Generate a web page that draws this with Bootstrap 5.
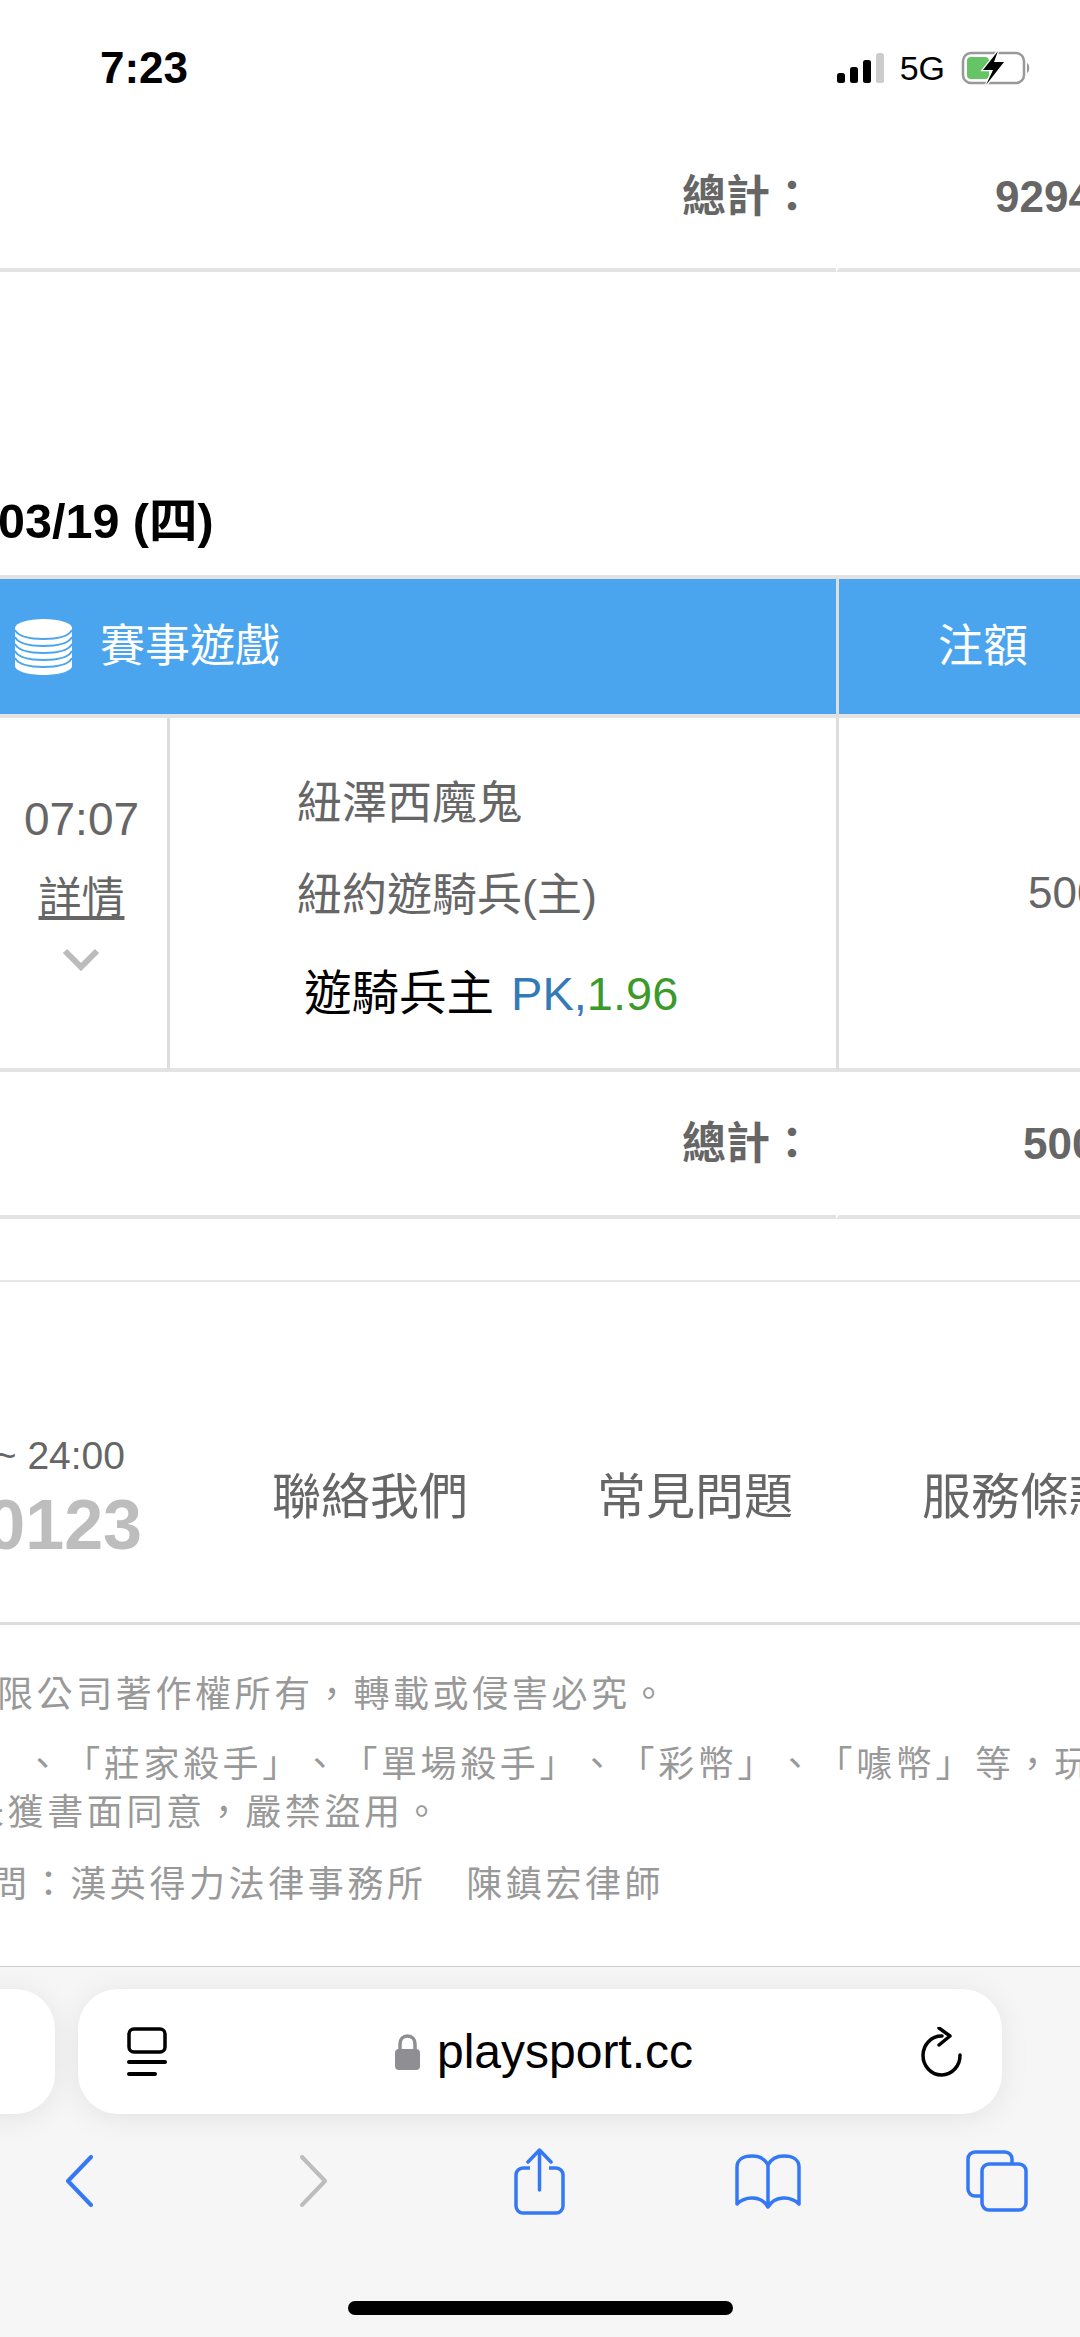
<!DOCTYPE html>
<html lang="zh-Hant">
<head>
<meta charset="utf-8">
<title>playsport.cc</title>
<link href="https://cdn.jsdelivr.net/npm/bootstrap@5.3.0/dist/css/bootstrap.min.css" rel="stylesheet">
<style>
html,body{width:1080px;height:2337px;overflow:hidden;margin:0;background:#fff;font-family:"Liberation Sans","Noto Sans CJK TC",sans-serif;color:#666}
.stat-strip{height:125px;padding:42px 49px 0 100px}
.stat-time{font-size:44px;line-height:52px;font-weight:700;color:#000}
.stat-icons{height:52px;gap:16px}
.stat-net{font-size:34px;line-height:36px;color:#000}
.sheet-wrap{width:1142px;margin-left:-6px}
.table.sheet{table-layout:fixed;width:1142px;margin:0;border-collapse:separate;border-spacing:0;--bs-table-bg:transparent;color:#666}
.c-a{width:173px}.c-b{width:669px}.c-c{width:300px}
.table.sheet>*>tr>*{padding:0;vertical-align:middle;border-bottom:4px solid #e3e3e3;font-size:44px;color:#666;font-weight:400}
.table.sheet>*>tr>.sum-label{height:147px;text-align:right;padding-right:22px;font-weight:700}
.table.sheet>*>tr>.sum-val{font-weight:700;border-left:3px solid #fff;white-space:nowrap}
.pad-a{padding-left:156px!important}
.pad-b{padding-left:184px!important}
.pad-c{padding-left:189px!important}
.day-title{font-size:48.500px;line-height:60px;font-weight:700;color:#000;margin:219px 0 24px -2px}
.table.sheet>thead>tr>th{height:143px;background:#4ba5ee;color:#fff;font-size:45px;border-top:4px solid #e3e3e3;border-bottom:4px solid #e3e3e3}
.table.sheet>thead>tr>.h-b{border-left:3px solid #ddd;padding-left:99px}
.h-a-in{padding-left:21px;gap:28px}
.table.sheet>tbody>tr>.t-cell{height:354px;text-align:center;padding-bottom:5px}
.table.sheet>tbody>tr>.m-cell{border-left:3px solid #ddd;padding:12px 0 0 127px}
.table.sheet>tbody>tr>.a-cell{border-left:3px solid #ddd}
.t-clock{font-size:46px;line-height:54px;margin-bottom:26px;padding-left:2px}
.t-more{font-size:43px;line-height:52px;color:#666;text-decoration:underline;display:block;margin-bottom:-1px;padding-left:2px}
.team{font-size:45px;line-height:54px;margin-bottom:38px}
.pick{font-size:47px;line-height:56px;color:#000;padding-left:7px;margin-top:43px;white-space:nowrap}
.pick-cjk{font-size:47.500px;margin-right:4px}
.pk{color:#337ab7}.odd{color:#3c9a2b}
.thin-rule{height:2px;background:#e8e8e8;margin-top:61px}
.foot-main{padding-top:150px;height:340px}
.foot-left{width:142px;flex:none}
.foot-hours{font-size:39px;line-height:48px;margin:0 17px 5px 0;white-space:nowrap}
.foot-phone{font-size:70px;line-height:80px;font-weight:700;color:#bdbdbd}
.foot-nav{margin:35px 0 0 130px;gap:129px;font-size:49px;line-height:60px;white-space:nowrap}
.foot-nav a{color:#666;text-decoration:none}
.notes{border-top:3px solid #ddd;padding:46px 0 57px;font-size:36px;line-height:48px;letter-spacing:3.600px;color:#999;white-space:nowrap;text-spacing-trim:space-all;font-kerning:none}
.n1{margin-left:-3px;margin-bottom:22px}
.n2{margin-left:-15px}
.n3{margin-left:-32px;margin-bottom:24px}
.n4{margin-left:-9px}
.safari{height:371px;background:#f6f6f6;border-top:1px solid #ccc;padding-top:22px}
.pill-row{gap:23px;margin-left:-25px}
.pill-side{width:80px;height:125px;background:#fff;border-radius:0 40px 40px 0;flex:none;box-shadow:0 4px 30px rgba(0,0,0,.08)}
.pill-main{width:924px;height:125px;background:#fff;border-radius:40px;flex:none;padding:0 40px 0 49px;box-shadow:0 4px 30px rgba(0,0,0,.08)}
.site{font-size:48px;line-height:56px;color:#000;gap:17px}
.tool-row{display:grid;grid-template-columns:230px 240px 210px 248px 210px;margin:32px 0 0 -36px;height:70px}
.home-bar{width:385px;height:14px;border-radius:7px;background:#000;margin:85px 0 0 348px}
</style>
</head>
<body>
<div class="stat-strip d-flex justify-content-between">
  <div class="stat-time">7:23</div>
  <div class="stat-icons d-flex align-items-center">
    <svg width="47" height="30" viewBox="0 0 47 30"><rect x="0" y="20" width="8" height="10" rx="2.5" fill="#000"/><rect x="13" y="14" width="8" height="16" rx="2.5" fill="#000"/><rect x="26" y="7" width="8" height="23" rx="2.5" fill="#000"/><rect x="39" y="0" width="8" height="30" rx="2.5" fill="#ccc"/></svg>
    <div class="stat-net">5G</div>
    <svg width="70" height="38" viewBox="0 0 70 38"><rect x="2" y="4" width="61" height="30" rx="8" fill="none" stroke="#999" stroke-width="2.5"/><rect x="6" y="8" width="22" height="22" rx="4" fill="#65c466"/><path d="M66 14c3 1 3 9 0 10z" fill="#999"/><path d="M37 2 22 21H32L25 36 43 13H33Z" fill="#000" stroke="#fff" stroke-width="2.5" paint-order="stroke"/></svg>
  </div>
</div>

<div class="sheet-wrap">
  <table class="table sheet">
    <colgroup><col class="c-a"><col class="c-b"><col class="c-c"></colgroup>
    <tbody><tr><td colspan="2" class="sum-label">總計：</td><td class="sum-val pad-a">9294</td></tr></tbody>
  </table>
</div>

<div class="day-title">03/19 (四)</div>

<div class="sheet-wrap">
  <table class="table sheet">
    <colgroup><col class="c-a"><col class="c-b"><col class="c-c"></colgroup>
    <thead>
      <tr>
        <th colspan="2">
          <div class="h-a-in d-flex align-items-center">
            <svg width="57" height="56" viewBox="0 0 57 56"><path d="M0 9V47C0 52 13 56 28.500 56S57 52 57 47V9Z" fill="#fff"/><ellipse cx="28.500" cy="9" rx="28.500" ry="9" fill="#fff"/><g fill="none" stroke="#4ba5ee" stroke-width="1.800"><path d="M0 11C3 17 14 20 28.500 20S54 17 57 11"/><path d="M0 18C3 24 14 27 28.500 27S54 24 57 18"/><path d="M0 25C3 31 14 34 28.500 34S54 31 57 25"/><path d="M0 32C3 38 14 41 28.500 41S54 38 57 32"/><path d="M0 39C3 45 14 48 28.500 48S54 45 57 39"/></g></svg>
            <span>賽事遊戲</span>
          </div>
        </th>
        <th class="h-b">注額</th>
      </tr>
    </thead>
    <tbody>
      <tr>
        <td class="t-cell">
          <div class="t-clock">07:07</div>
          <a class="t-more" href="#">詳情</a>
          <svg width="38" height="23" viewBox="0 0 38 23"><path d="M3 3 19 19 35 3" fill="none" stroke="#bbb" stroke-width="6"/></svg>
        </td>
        <td class="m-cell">
          <div class="team">紐澤西魔鬼</div>
          <div class="team">紐約遊騎兵(主)</div>
          <div class="pick"><span class="pick-cjk">遊騎兵主</span> <span class="pk">PK,</span><span class="odd">1.96</span></div>
        </td>
        <td class="a-cell pad-c">500</td>
      </tr>
      <tr><td colspan="2" class="sum-label">總計：</td><td class="sum-val pad-b">500</td></tr>
    </tbody>
  </table>
</div>

<div class="thin-rule"></div>

<div class="foot-main d-flex">
  <div class="foot-left d-flex flex-column align-items-end">
    <div class="foot-hours">~ 24:00</div>
    <div class="foot-phone">0123</div>
  </div>
  <nav class="foot-nav d-flex">
    <a href="#">聯絡我們</a><a href="#">常見問題</a><a href="#">服務條款</a>
  </nav>
</div>

<div class="notes">
  <div class="n1">限公司著作權所有，轉載或侵害必究。</div>
  <div class="n2">」、「莊家殺手」、「單場殺手」、「彩幣」、「噱幣」等，玩運彩</div>
  <div class="n3">未獲書面同意，嚴禁盜用。</div>
  <div class="n4">問：漢英得力法律事務所　陳鎮宏律師</div>
</div>

<div class="safari">
  <div class="pill-row d-flex">
    <div class="pill-side"></div>
    <div class="pill-main d-flex align-items-center justify-content-between">
      <svg width="40" height="49" viewBox="0 0 40 49"><rect x="2" y="2" width="36" height="23" rx="5" fill="none" stroke="#000" stroke-width="3.500"/><path d="M2 35H38M2 47H28" stroke="#000" stroke-width="4" stroke-linecap="round"/></svg>
      <div class="site d-flex align-items-center">
        <svg width="25" height="36" viewBox="0 0 25 36"><rect x="0" y="15" width="25" height="21" rx="4" fill="#8e8e93"/><path d="M5 16V10C5 5 8 2 12.500 2S20 5 20 10V16" fill="none" stroke="#8e8e93" stroke-width="3.500"/></svg>
        <span>playsport.cc</span>
      </div>
      <svg width="41" height="50" viewBox="0 0 41 50"><path d="M21 9A18.500 19.500 0 1 0 39 28" fill="none" stroke="#000" stroke-width="3.500" stroke-linecap="round"/><path d="M18 1 29 9 18 18" fill="none" stroke="#000" stroke-width="3.500" stroke-linecap="round" stroke-linejoin="round"/></svg>
    </div>
  </div>
  <div class="tool-row">
    <div class="d-flex align-items-center justify-content-center"><svg width="28" height="52" viewBox="0 0 28 52"><path d="M26 2 3 26 26 50" fill="none" stroke="#3478f6" stroke-width="4" stroke-linecap="round" stroke-linejoin="round"/></svg></div>
    <div class="d-flex align-items-center justify-content-center"><svg width="28" height="52" viewBox="0 0 28 52"><path d="M2 2 25 26 2 50" fill="none" stroke="#bdbdbd" stroke-width="4" stroke-linecap="round" stroke-linejoin="round"/></svg></div>
    <div class="d-flex align-items-center justify-content-center"><svg width="51" height="67" viewBox="0 0 51 67"><path d="M16 20H9A7 7 0 0 0 2 27V58A7 7 0 0 0 9 65H42A7 7 0 0 0 49 58V27A7 7 0 0 0 42 20H35" fill="none" stroke="#3478f6" stroke-width="3.500"/><path d="M25.500 42V3M14 14 25.500 2 37 14" fill="none" stroke="#3478f6" stroke-width="3.500" stroke-linecap="round" stroke-linejoin="round"/></svg></div>
    <div class="d-flex align-items-center justify-content-center"><svg width="66" height="55" viewBox="0 0 66 55"><path d="M33 11C30 5 24 2 17 2 8 2 2 6 2 13V50C10 42 26 41 33 53 40 41 56 42 64 50V13C64 6 58 2 49 2 42 2 36 5 33 11ZM33 11V52" fill="none" stroke="#3478f6" stroke-width="3.500" stroke-linejoin="round"/></svg></div>
    <div class="d-flex align-items-center justify-content-center"><svg width="62" height="62" viewBox="0 0 62 62"><path d="M46 14V9A7 7 0 0 0 39 2H9A7 7 0 0 0 2 9V39A7 7 0 0 0 9 46H16" fill="none" stroke="#3478f6" stroke-width="3.500"/><rect x="16" y="14" width="44" height="46" rx="7" fill="none" stroke="#3478f6" stroke-width="3.500"/></svg></div>
  </div>
  <div class="home-bar"></div>
</div>

<script src="https://cdn.jsdelivr.net/npm/bootstrap@5.3.0/dist/js/bootstrap.bundle.min.js"></script>
</body>
</html>
